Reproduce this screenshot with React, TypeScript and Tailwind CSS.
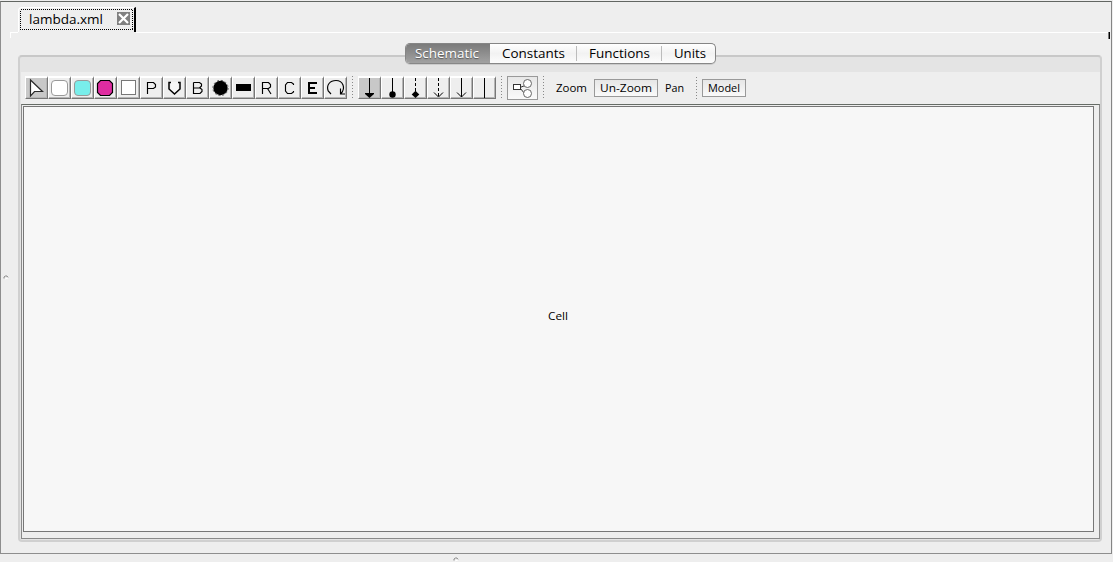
import type { ReactNode } from "react";

const font = "font-['Open_Sans','Noto_Sans',sans-serif]";

function Label({ text, width, size }: { text: string; width: number; size: number }) {
  return (
    <svg width={width} height={18} className="block shrink-0 overflow-visible">
      <text x={0} y={13} fontSize={size} textLength={width} lengthAdjust="spacingAndGlyphs" fill="currentColor">
        {text}
      </text>
    </svg>
  );
}

function Tool({ children, active = false }: { children: ReactNode; active?: boolean }) {
  return (
    <button
      className={
        "flex h-[23px] w-[23px] shrink-0 border-b border-r border-t-2 border-l border-t-white border-l-white border-b-[#777] border-r-[#777] shadow-[inset_-1px_-1px_0_#b5b5b5] " +
        (active ? "bg-[#c8c8c8]" : "bg-[#eeeeee]")
      }
    >
      <svg
        width="23"
        height="23"
        viewBox="0 0 23 23"
        className="-ml-px -mt-0.5 block shrink-0"
        fill="none"
        stroke="#000"
      >
        {children}
      </svg>
    </button>
  );
}

function Separator() {
  return (
    <svg width="1" height="23" className="block shrink-0" shapeRendering="crispEdges">
      <path d="M.5 0V23" stroke="#888" strokeDasharray="1 2" />
    </svg>
  );
}

const octagon = "M6.5 4.5H15.5L18.5 7.5V16.5L15.5 19.5H6.5L3.5 16.5V7.5Z";

function DrawingTools() {
  return (
    <div className="flex">
      <Tool active>
        <path d="M5.5 4V20L9.5 15.5H17.5Z" fill="#fff" stroke="#292929" strokeWidth="1.2" />
      </Tool>
      <Tool>
        <rect x="3.5" y="4.5" width="16" height="15" rx="3.5" fill="#fff" stroke="#999" />
      </Tool>
      <Tool>
        <rect x="3.5" y="4.5" width="16" height="15" rx="3.5" fill="#78eeeb" stroke="#999" />
      </Tool>
      <Tool>
        <path d={octagon} fill="#df2ca1" strokeWidth="1.2" />
      </Tool>
      <Tool>
        <rect x="4.5" y="4.5" width="14" height="14" fill="#fff" stroke="#777" />
      </Tool>
      <Tool>
        <path d="M7.5 18V6.5H13.5L15.5 8.5V11L13.5 12.5H7.5" strokeWidth="1.15" />
      </Tool>
      <Tool>
        <path d="M8 6H15V14L12 17L8 14Z" fill="#f6f6f6" stroke="none" />
        <path d="M8 6.5H6V13L11.5 18L17 13V6.5H15" strokeWidth="1.5" />
      </Tool>
      <Tool>
        <path d="M7.5 6.5H13.5L15.5 8V10L13.5 12H7.5V6.5M7.5 12V17.5H14L16 15.5V13.5L14 12" strokeWidth="1.15" />
      </Tool>
      <Tool>
        <circle cx="11.5" cy="12" r="7.2" fill="#000" stroke="none" />
        <circle cx="11.5" cy="12" r="7.6" stroke="#555" strokeDasharray="2 2" />
      </Tool>
      <Tool>
        <path d="M4 8H19V15H4Z" fill="#000" stroke="none" />
      </Tool>
      <Tool>
        <path d="M7.5 18V6.5H13.5L15.5 8.5V11L13.5 12.5H7.5M12.5 12.5L16 18" strokeWidth="1.15" />
      </Tool>
      <Tool>
        <path d="M15.5 9V8L13.5 6.5H9.5L7.5 9V15L9.5 17.5H13.5L15.5 16V15" strokeWidth="1.15" />
      </Tool>
      <Tool>
        <path d="M16 7H8V17H16M8 12H14" strokeWidth="2" />
      </Tool>
      <Tool>
        <path d="M7 18L4.2 15C2 9 6 4.5 12 4.5C19 4.5 22 12 17 17.5M16.5 12.5V18H21" strokeWidth="1.15" />
      </Tool>
    </div>
  );
}

function ConnectionTools() {
  return (
    <div className="flex">
      <Tool active>
        <path d="M11.5 2V18" />
        <path d="M7 17H16V18L11.5 22L7 18Z" fill="#000" stroke="none" />
      </Tool>
      <Tool>
        <path d="M11.5 2V18" />
        <circle cx="11.5" cy="18.5" r="3.2" fill="#000" stroke="none" />
      </Tool>
      <Tool>
        <path d="M11.5 2V16" strokeDasharray="3 2" />
        <path d="M11.5 14.7L15.3 18.5L11.5 22L7.7 18.5Z" fill="#000" stroke="none" />
      </Tool>
      <Tool>
        <path d="M11.5 2V21" strokeDasharray="3 2" />
        <path d="M7 16.5L11.5 21L16 16.5" />
      </Tool>
      <Tool>
        <path d="M11.5 2V21M7 16.5L11.5 21L16 16.5" />
      </Tool>
      <Tool>
        <path d="M11.5 2V22" />
      </Tool>
    </div>
  );
}

const actionButton =
  "flex h-[18px] items-center border border-[#999] bg-linear-to-b from-[#e6e6e6] to-[#fafafa] text-black";

function Toolbar() {
  return (
    <div className="flex h-8 shrink-0 bg-[#eeeeee] pl-1 pt-1">
      <DrawingTools />
      <div className="ml-[5px] mr-[5px]"><Separator /></div>
      <ConnectionTools />
      <div className="mx-[5px]"><Separator /></div>
      <button className="h-6 w-[31px] shrink-0 border border-[#999] bg-linear-to-b from-[#e7e7e7] to-[#fafafa]">
        <svg width="29" height="22" className="block" fill="#fff" stroke="#333">
          <path d="M12 10.5L17 8.5M12 11L17 17" />
          <rect x="5.5" y="7.5" width="7" height="5" />
          <circle cx="19.5" cy="6.5" r="4" stroke="#666" />
          <circle cx="19.5" cy="16.5" r="4" stroke="#666" />
        </svg>
      </button>
      <div className="ml-[5px]"><Separator /></div>
      <div className="flex h-6 items-center">
        <button className="ml-3"><Label text="Zoom" width={31} size={11} /></button>
        <button className={actionButton + " ml-[7px] w-16 pl-[5px]"}>
          <Label text="Un-Zoom" width={52} size={11} />
        </button>
        <button className="ml-[7px]"><Label text="Pan" width={19} size={11} /></button>
        <div className="ml-3 mr-[5px]"><Separator /></div>
        <button className={actionButton + " w-11 pl-[5px]"}>
          <Label text="Model" width={32} size={11} />
        </button>
      </div>
    </div>
  );
}

function DocumentTabs() {
  return (
    <div className="flex h-[30px] w-full shrink-0 items-end pl-[9px] pr-px">
      <div className="h-1.5 w-2 translate-y-1.5 border-l border-t border-white" />
      <div className="flex h-[25px] w-[118px] shrink-0 rounded-tl-sm border-l border-r-2 border-t border-l-white border-r-black border-t-white pl-px pt-px">
        <svg width="113" height="21" className="block shrink-0" shapeRendering="crispEdges">
          <rect x=".5" y=".5" width="112" height="20" fill="none" stroke="#000" strokeDasharray="1 1" />
          <text x="9" y="15" fontSize="13" textLength="74" lengthAdjust="spacingAndGlyphs">lambda.xml</text>
          <rect x="97" y="3" width="13" height="13" fill="#808080" />
          <g shapeRendering="geometricPrecision">
            <path d="M99 5L108 14M108 5L99 14" stroke="#fff" strokeWidth="2.2" />
          </g>
        </svg>
      </div>
      <div className="flex h-1.5 grow translate-y-1.5 border-t border-white">
        <div className="-mt-px ml-auto h-[7px] w-0.5 shrink-0 border-l border-r border-l-[#777] border-r-black" />
      </div>
    </div>
  );
}

function ViewTabs() {
  return (
    <div className="flex h-[21px] w-[311px] rounded-[5px] border border-[#858585] border-b-[#888] bg-linear-to-b from-white via-[#f2f2f2] to-[#fdfdfd] shadow-[0_1px_0_#ccc]">
      <button className="flex w-[84px] items-center rounded-l bg-linear-to-b from-[#7b7b7b] to-[#a2a2a2] pl-[9px] text-white [text-shadow:0_1px_1px_#555]">
        <Label text="Schematic" width={64} size={13} />
      </button>
      <button className="flex w-[86px] items-center pl-3"><Label text="Constants" width={63} size={13} /></button>
      <span className="my-0.5 w-px bg-[#bcbcbc]" />
      <button className="flex w-[84px] items-center pl-3"><Label text="Functions" width={61} size={13} /></button>
      <span className="my-0.5 w-px bg-[#bcbcbc]" />
      <button className="flex w-[52px] items-center pl-3"><Label text="Units" width={32} size={13} /></button>
    </div>
  );
}

function Knob() {
  return (
    <svg width="6" height="5" className="block">
      <path d="M1 3.5V2L2.5 1H4L5 2.5" fill="none" stroke="#888" />
      <path d="M2 4L5 3" stroke="#fff" />
    </svg>
  );
}

export default function App() {
  return (
    <div className={"flex h-[562px] w-[1113px] flex-col overflow-hidden bg-[#eeeeee] pt-px text-black " + font}>
      <div className="flex h-[553px] w-[1112px] shrink-0 flex-col border border-b-[#8e8e8e] border-l-[#8e8e8e] border-r-[#858585] border-t-[#626662]">
        <DocumentTabs />
        <div className="mt-[11px] flex w-full flex-col">
          <div className="relative z-10 mb-[-9px] ml-[404px] w-[311px]"><ViewTabs /></div>
          <div className="ml-[17px] flex h-[487px] w-[1084px] flex-col rounded border-2 border-[#d0d0d0] border-t-[#c8c8c8] bg-[#e4e4e4] pl-px">
            <div className="h-[15px] shrink-0" />
            <Toolbar />
            <div className="h-[435px] w-[1079px] shrink-0 border border-[#8a8a8a] border-t-[#666c66] bg-[#eeeeee] pl-px pt-px">
              <div className="flex h-[426px] w-[1071px] justify-start border border-[#777] bg-[#f7f7f7] pl-[524px] pt-[200px]">
                <Label text="Cell" width={20} size={11} />
              </div>
            </div>
          </div>
        </div>
      </div>
      <div className="ml-[453px] mt-[3px]"><Knob /></div>
      <div className="absolute left-[3px] top-[275px]"><Knob /></div>
    </div>
  );
}
